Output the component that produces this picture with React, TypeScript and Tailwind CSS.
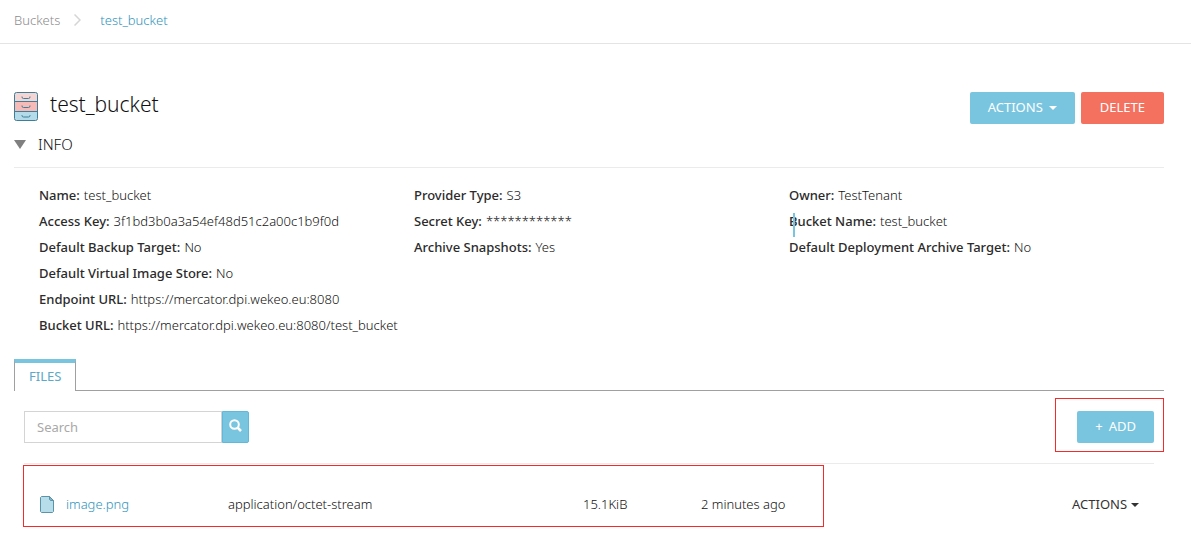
import type { ReactNode } from 'react';

type Detail = { label: string; value: string; caret?: boolean };

const columns: Detail[][] = [
  [
    { label: 'Name', value: 'test_bucket' },
    { label: 'Access Key', value: '3f1bd3b0a3a54ef48d51c2a00c1b9f0d' },
    { label: 'Default Backup Target', value: 'No' },
    { label: 'Default Virtual Image Store', value: 'No' },
    { label: 'Endpoint URL', value: 'https://mercator.dpi.wekeo.eu:8080' },
    { label: 'Bucket URL', value: 'https://mercator.dpi.wekeo.eu:8080/test_bucket' },
  ],
  [
    { label: 'Provider Type', value: 'S3' },
    { label: 'Secret Key', value: '************' },
    { label: 'Archive Snapshots', value: 'Yes' },
  ],
  [
    { label: 'Owner', value: 'TestTenant' },
    { label: 'Bucket Name', value: 'test_bucket', caret: true },
    { label: 'Default Deployment Archive Target', value: 'No' },
  ],
];

function Caret() {
  return (
    <svg width="8" height="4" viewBox="0 0 8 4" fill="currentColor" className="mt-0.5" aria-hidden="true">
      <path d="M0 0h8L4 4z" />
    </svg>
  );
}

function BucketIcon() {
  return (
    <svg width="24" height="29" viewBox="0 0 24 29" aria-hidden="true">
      <rect x="0.5" y="0.5" width="23" height="28" rx="2" fill="#f5d5d4" />
      <path d="M1 10h22v9H1z" fill="#f7bab6" />
      <path d="M1 19h22v7a2 2 0 0 1-2 2H3a2 2 0 0 1-2-2z" fill="#b3dbea" />
      <g fill="none" stroke="#3d7f98">
        <rect x="0.5" y="0.5" width="23" height="28" rx="2" />
        <path d="M1 9.5h22M1 19.5h22" />
        <path d="M8 4.5v.5q0 1.5 1.5 1.5h5q1.5 0 1.5-1.5v-.5M8 13.5v.5q0 1.5 1.5 1.5h5q1.5 0 1.5-1.5v-.5M8 23v.5q0 1.5 1.5 1.5h5q1.5 0 1.5-1.5V23" />
      </g>
    </svg>
  );
}

function FileIcon() {
  return (
    <svg width="14" height="17" viewBox="0 0 14 17" aria-hidden="true">
      <path d="M1.5 .5H9.5L13.5 4.5V15.5L12.5 16.5H1.5L.5 15.5V1.5z" fill="#b7dcea" stroke="#5b93a9" />
      <path d="M9.5 .5L13.5 4.5H10.5L9.5 3.5z" fill="#7fb0c3" stroke="#5b93a9" />
    </svg>
  );
}

function Button({ className, children }: { className: string; children: ReactNode }) {
  return (
    <button
      type="button"
      className={`flex h-8 items-center justify-center gap-1.5 rounded-xs pb-0.5 font-normal text-white ${className}`}
    >
      {children}
    </button>
  );
}

export default function App() {
  return (
    <div className="min-h-screen bg-white font-['Noto_Sans',sans-serif] text-[13px] leading-[26px] font-light text-[#111]">
      <nav aria-label="Breadcrumb" className="border-b border-[#e4e4e4] px-3.5 pt-[7px] pb-2.5">
        <ol className="flex items-center">
          <li>
            <a href="#buckets" className="text-[#8c8c8c]">Buckets</a>
          </li>
          <li aria-hidden="true" className="mr-[19px] ml-3.5">
            <svg width="7" height="12" viewBox="0 0 7 12" fill="none" stroke="#d5d5d5" strokeWidth="1.5">
              <path d="M.5 .5L6 6L.5 11.5" />
            </svg>
          </li>
          <li>
            <a href="#test_bucket" aria-current="page" className="text-[#2f94bd]">test_bucket</a>
          </li>
        </ol>
      </nav>

      <main className="pt-12 pr-[27px] pl-3.5">
        <header className="flex items-start justify-between">
          <div className="flex items-start gap-3">
            <BucketIcon />
            <h1 className="text-[21px] leading-6">test_bucket</h1>
          </div>
          <div className="flex gap-1.5">
            <Button className="bg-[#79c5e0] px-[18px]">
              ACTIONS <Caret />
            </Button>
            <Button className="bg-[#f4705f] px-[19px]">DELETE</Button>
          </div>
        </header>

        <section>
          <h2 className="border-b border-[#ebebeb] pt-[7px] pb-2.5 text-[15px]">
            <button type="button" aria-expanded="true" className="flex items-center gap-3">
              <svg width="12" height="9" viewBox="0 0 12 9" fill="#808080" aria-hidden="true">
                <path d="M0 0h12L6 9z" />
              </svg>
              INFO
            </button>
          </h2>
          <div className="grid grid-cols-3 pt-3.5 pl-[25px]">
            {columns.map((items) => (
              <dl key={items[0].label}>
                {items.map((item) => (
                  <div key={item.label} className="relative flex gap-1 whitespace-nowrap">
                    <dt className="font-medium text-[#2b2b2b]">{item.label}:</dt>
                    <dd>{item.value}</dd>
                    {item.caret && <span className="absolute top-[5px] left-1 h-6 w-0.5 bg-[#79c5e0]" />}
                  </div>
                ))}
              </dl>
            ))}
          </div>
        </section>

        <div role="tablist" className="mt-[21px] flex border-b border-[#a0a0a0]">
          <button
            type="button"
            role="tab"
            aria-selected="true"
            className="-mb-px flex h-8 items-start border-x border-t-4 border-x-[#a0a0a0] border-t-[#79c5e0] bg-white px-3.5 leading-[26px] font-normal text-[#5aa9c9]"
          >
            FILES
          </button>
        </div>

        <section className="px-2.5 pt-5">
          <div className="flex items-start justify-between border-b border-[#ebebeb] pb-5">
            <form role="search" className="flex">
              <input
                type="search"
                aria-label="Search"
                placeholder="Search"
                className="h-8 w-[198px] border border-[#d4d4d4] px-3 font-normal placeholder:text-[#a9a9a9]"
              />
              <button
                type="button"
                aria-label="Search files"
                className="flex h-8 w-[27px] justify-center rounded-r-xs border border-[#62b8d8] bg-[#79c5e0] pt-[7px]"
              >
                <svg width="13" height="13" viewBox="0 0 13 13" fill="none" stroke="white" strokeWidth="2" aria-hidden="true">
                  <circle cx="5.5" cy="5.5" r="4.3" />
                  <path d="M8.6 8.6L12 12" strokeWidth="2.6" />
                </svg>
              </button>
            </form>
            <div className="relative">
              <Button className="bg-[#79c5e0] px-[18px]">
                <span>+</span>
                <span>ADD</span>
              </Button>
              <div className="pointer-events-none absolute -top-[13px] -right-2.5 h-[54px] w-[109px] border border-[#f52a2a]" />
            </div>
          </div>

          <div className="relative pt-[27px]">
            <table className="w-full table-fixed text-left">
              <colgroup>
                <col className="w-[42px]" />
                <col className="w-[162px]" />
                <col className="w-[355px]" />
                <col className="w-[118px]" />
                <col />
                <col className="w-[82px]" />
              </colgroup>
              <tbody>
                <tr>
                  <td className="pl-4">
                    <FileIcon />
                  </td>
                  <td>
                    <a href="#image.png" className="text-[#2f94bd]">image.png</a>
                  </td>
                  <td>application/octet-stream</td>
                  <td>15.1KiB</td>
                  <td>2 minutes ago</td>
                  <td>
                    <button type="button" className="flex items-center gap-1 font-normal text-[#333]">
                      ACTIONS <Caret />
                    </button>
                  </td>
                </tr>
              </tbody>
            </table>
            <div className="pointer-events-none absolute top-px -left-px h-[62px] w-[801px] border border-[#f52a2a]" />
          </div>
        </section>
      </main>
    </div>
  );
}
